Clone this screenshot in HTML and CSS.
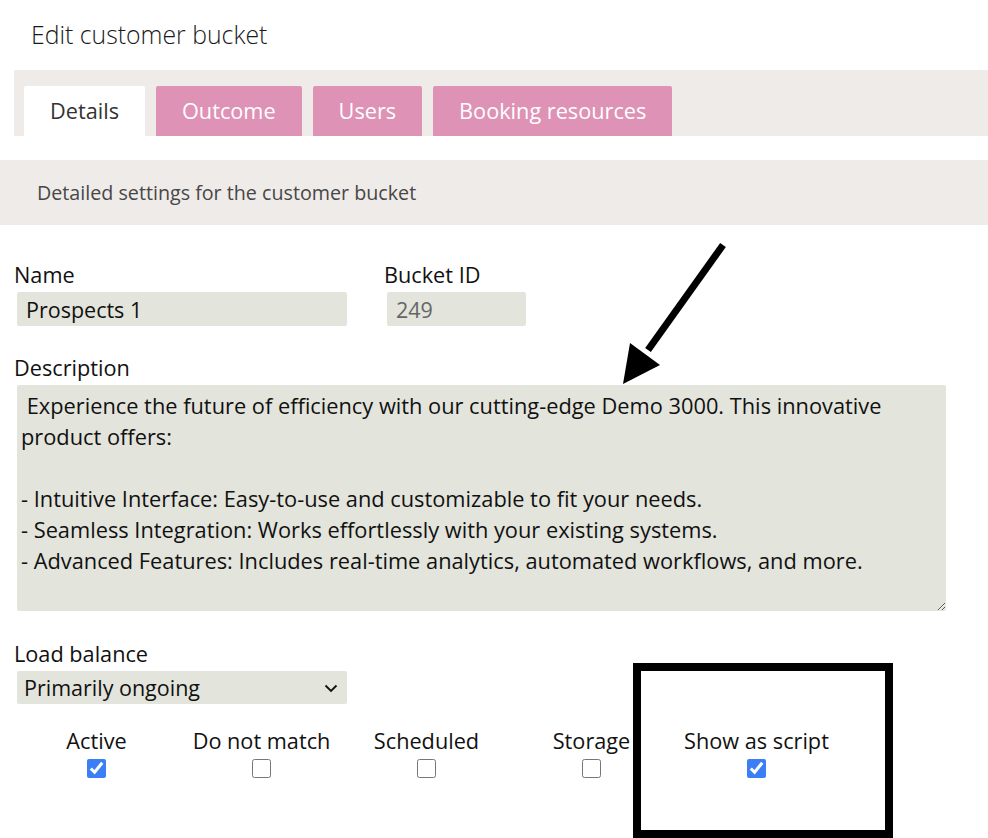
FILE: index.html
```html
<!DOCTYPE html>
<html lang="en">
<head>
<meta charset="UTF-8">
<title>Edit customer bucket</title>
<link rel="stylesheet" href="styles.css">
</head>
<body>

<h1 class="title">Edit customer bucket</h1>

<div class="tabs">
  <a class="tab tab-active">Details</a>
  <a class="tab">Outcome</a>
  <a class="tab">Users</a>
  <a class="tab">Booking resources</a>
</div>

<div class="intro">Detailed settings for the customer bucket</div>

<form class="form">
  <div class="row">
    <div class="field field-name">
      <label for="name">Name</label>
      <input id="name" class="input input-name" type="text" value="Prospects 1">
    </div>
    <div class="field">
      <label for="bucketId">Bucket ID</label>
      <input id="bucketId" class="input input-id" type="text" value="249" readonly>
    </div>
  </div>

  <div class="field field-desc">
    <label for="description">Description</label>
    <textarea id="description" class="textarea" wrap="off"> Experience the future of efficiency with our cutting-edge Demo 3000. This innovative
product offers:

- Intuitive Interface: Easy-to-use and customizable to fit your needs.
- Seamless Integration: Works effortlessly with your existing systems.
- Advanced Features: Includes real-time analytics, automated workflows, and more.</textarea>
  </div>

  <div class="field">
    <label for="loadBalance">Load balance</label>
    <div class="select-wrap">
      <select id="loadBalance" class="select">
        <option>Primarily ongoing</option>
        <option>Primarily new</option>
        <option>Even</option>
      </select>
      <svg class="chevron" width="14" height="9" viewBox="0 0 14 9"><path d="M1.5 1.5 L7 7 L12.5 1.5" fill="none" stroke="#111" stroke-width="1.8"/></svg>
    </div>
  </div>

  <div class="flags">
    <label class="flag">Active<input type="checkbox" checked></label>
    <label class="flag">Do not match<input type="checkbox"></label>
    <label class="flag">Scheduled<input type="checkbox"></label>
    <label class="flag">Storage<input type="checkbox"></label>
    <label class="flag">Show as script<input type="checkbox" checked></label>
  </div>
</form>

<!-- annotations drawn over the screenshot -->
<svg class="arrow" width="988" height="838" viewBox="0 0 988 838">
  <line x1="723" y1="245" x2="648" y2="350" stroke="#000" stroke-width="7"/>
  <polygon points="623,384 630,343 660,365" fill="#000"/>
</svg>
<div class="highlight"></div>

</body>
</html>
```

FILE: styles.css
```css
body {
  font-family: "Open Sans", "Noto Sans", sans-serif;
  color: #111;
  background-color: #fff;
  margin: 0;
  padding: 0;
  position: relative;
  width: 988px;
  height: 838px;
  overflow: hidden;
}
.title {
  font-size: 24.8px;
  font-weight: 300;
  line-height: 34px;
  color: #1a1a1a;
  margin: 0 0 19px 0;
  padding: 17px 0 0 31px;
}
.tabs {
  display: flex;
  gap: 11px;
  margin-left: 14px;
  padding: 16px 0 0 10px;
  background-color: #efebe8;
}
.tab {
  height: 50px;
  line-height: 50px;
  padding: 0 26px;
  font-size: 21.7px;
  color: #fff;
  background-color: #de92b6;
  border-radius: 2px 2px 0 0;
}
.tab-active {
  background-color: #fff;
  color: #333;
}
.intro {
  margin-top: 24px;
  height: 65px;
  line-height: 65px;
  padding-left: 37px;
  font-size: 19.7px;
  color: #474747;
  background-color: #efebe8;
}
.form {
  padding: 37px 0 0 14px;
}
.row {
  display: flex;
  margin-bottom: 29px;
}
.field-name {
  width: 370px;
}
.field label {
  display: block;
  font-size: 21.7px;
  line-height: 26px;
  margin-bottom: 4px;
}
.input {
  display: block;
  box-sizing: border-box;
  height: 34px;
  margin-left: 3px;
  padding: 0 9px;
  border: none;
  border-radius: 2px;
  background-color: #e3e4dc;
  font-family: inherit;
  font-size: 21.5px;
  color: #111;
}
.input-name {
  width: 330px;
}
.input-id {
  width: 139px;
  color: #666;
}
.field-desc {
  margin-bottom: 30px;
}
.textarea {
  display: block;
  box-sizing: border-box;
  width: 929px;
  height: 226px;
  margin-left: 3px;
  padding: 5px 4px;
  border: none;
  border-radius: 2px;
  background-color: #e3e4dc;
  font-family: inherit;
  font-size: 21.8px;
  line-height: 31px;
  color: #111;
  overflow: hidden;
  resize: both;
}
.select-wrap {
  position: relative;
  width: 330px;
  margin-left: 3px;
}
.select {
  display: block;
  width: 330px;
  height: 33px;
  padding: 0 7px;
  border: none;
  border-radius: 2px;
  background-color: #e3e4dc;
  font-family: inherit;
  font-size: 21.5px;
  color: #111;
  appearance: none;
}
.chevron {
  position: absolute;
  right: 9px;
  top: 13px;
  pointer-events: none;
}
.flags {
  display: grid;
  grid-template-columns: repeat(5, 165px);
  margin-top: 24px;
}
.flag {
  display: flex;
  flex-direction: column;
  align-items: center;
  font-size: 21.7px;
  line-height: 26px;
}
.flag input {
  width: 19px;
  height: 19px;
  margin: 5px 0 0 0;
  accent-color: #3b7ff6;
}
.arrow {
  position: absolute;
  left: 0;
  top: 0;
  pointer-events: none;
}
.highlight {
  position: absolute;
  left: 633px;
  top: 663px;
  width: 260px;
  height: 175px;
  box-sizing: border-box;
  border: 8px solid #000;
  pointer-events: none;
}
```
